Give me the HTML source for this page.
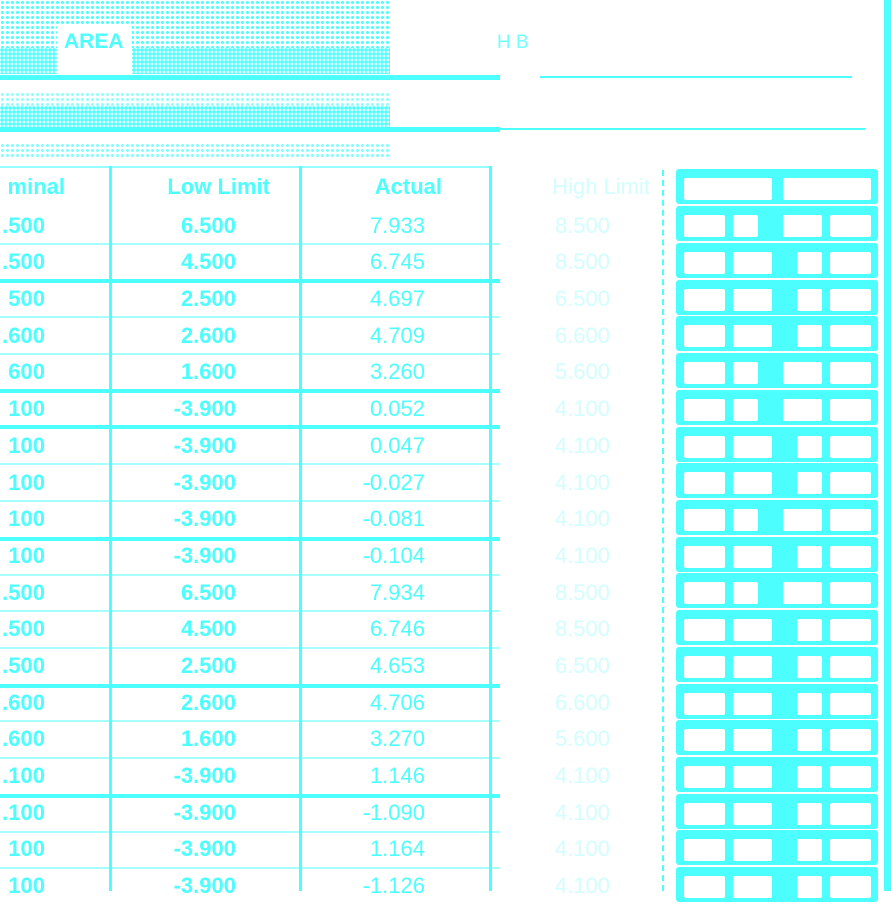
<!DOCTYPE html>
<html><head><meta charset="utf-8"><style>
*{margin:0;padding:0;box-sizing:border-box}
body{width:891px;height:891px;background:#fff;position:relative;overflow:hidden;font-family:"Liberation Sans",sans-serif;color:#4dfefe}
.a{position:absolute}
.noise{background-image:radial-gradient(#4dfefe 1.3px,transparent 1.8px);background-size:5px 5px}
.noise2{background-image:radial-gradient(#4dfefe 1.6px,transparent 2px);background-size:4px 4px}
.r{position:absolute;left:0;width:891px;height:37px;line-height:37px;font-size:22px;font-weight:bold}
.r span{position:absolute;text-align:right}
.c1{left:-60px;width:105px}
.c2{left:130px;width:106px}
.c3{left:310px;width:115px;font-weight:normal}
.c4{left:520px;width:90px;color:#d2fefe;font-weight:normal}
.cy{position:absolute;left:676px;width:202px;height:35px;background:#4dfefe;border-radius:3px}
.cy i{position:absolute;top:9px;height:22px;background:#fff;border-radius:2px}
.hl{position:absolute;left:0;width:500px;height:4px;background:#4dfefe}
.tl{position:absolute;left:0;width:500px;height:2px;background:#4dfefe;opacity:.5}
</style></head><body>
<div class="a noise" style="left:0;top:0;width:390px;height:48px"></div>
<div class="a noise2" style="left:0;top:48px;width:390px;height:26px"></div>
<div class="a" style="left:57px;top:26px;width:75px;height:48px;background:#fff"></div>
<div class="a" style="left:64px;top:30px;font-size:21px;font-weight:bold">AREA</div>
<div class="a" style="left:497px;top:32px;font-size:19px;opacity:.8">H B</div>
<div class="a" style="left:0;top:75px;width:500px;height:5px;background:#4dfefe"></div>
<div class="a" style="left:540px;top:76px;width:312px;height:2px;background:#4dfefe"></div>
<div class="a noise" style="left:0;top:92px;width:390px;height:14px;opacity:.6"></div>
<div class="a noise2" style="left:0;top:106px;width:390px;height:22px"></div>
<div class="a" style="left:0;top:127px;width:500px;height:5px;background:#4dfefe"></div>
<div class="a" style="left:500px;top:128px;width:365px;height:2px;background:#4dfefe"></div>
<div class="a noise" style="left:0;top:143px;width:390px;height:14px;opacity:.7"></div>
<div class="a" style="left:0;top:166px;width:490px;height:2px;background:#4dfefe;opacity:.6"></div>
<div class="a" style="left:109px;top:166px;width:3px;height:725px;background:#4dfefe"></div>
<div class="a" style="left:299px;top:166px;width:3px;height:725px;background:#4dfefe"></div>
<div class="a" style="left:489px;top:166px;width:3px;height:725px;background:#4dfefe"></div>
<div class="a" style="left:662px;top:170px;width:2px;height:721px;border-left:2px dashed #4dfefe"></div>
<div class="a" style="left:884px;top:0;width:7px;height:891px;background:#4dfefe"></div>
<div class="r" style="top:168px"><span class="c1" style="width:125px">minal</span><span style="left:140px;width:130px">Low Limit</span><span style="left:352px;width:90px">Actual</span><span style="left:510px;width:140px;color:#d2fefe;font-weight:normal">High Limit</span></div>
<div class="cy" style="top:169px;height:35px"><i style="left:8px;width:88px"></i><i style="left:107px;width:88px"></i></div>
<div class="hl" style="top:279px"></div><div class="hl" style="top:389px"></div><div class="hl" style="top:425px"></div><div class="hl" style="top:537px"></div><div class="hl" style="top:684px"></div><div class="hl" style="top:794px"></div>
<div class="tl" style="top:243px"></div><div class="tl" style="top:316px"></div><div class="tl" style="top:353px"></div><div class="tl" style="top:463px"></div><div class="tl" style="top:500px"></div><div class="tl" style="top:574px"></div><div class="tl" style="top:610px"></div><div class="tl" style="top:647px"></div><div class="tl" style="top:720px"></div><div class="tl" style="top:757px"></div><div class="tl" style="top:831px"></div><div class="tl" style="top:867px"></div>

<div class="r" style="top:207px"><span class="c1">.500</span><span class="c2">6.500</span><span class="c3">7.933</span><span class="c4">8.500</span></div>
<div class="r" style="top:243px"><span class="c1">.500</span><span class="c2">4.500</span><span class="c3">6.745</span><span class="c4">8.500</span></div>
<div class="r" style="top:280px"><span class="c1">500</span><span class="c2">2.500</span><span class="c3">4.697</span><span class="c4">6.500</span></div>
<div class="r" style="top:317px"><span class="c1">.600</span><span class="c2">2.600</span><span class="c3">4.709</span><span class="c4">6.600</span></div>
<div class="r" style="top:353px"><span class="c1">600</span><span class="c2">1.600</span><span class="c3">3.260</span><span class="c4">5.600</span></div>
<div class="r" style="top:390px"><span class="c1">100</span><span class="c2">-3.900</span><span class="c3">0.052</span><span class="c4">4.100</span></div>
<div class="r" style="top:427px"><span class="c1">100</span><span class="c2">-3.900</span><span class="c3">0.047</span><span class="c4">4.100</span></div>
<div class="r" style="top:464px"><span class="c1">100</span><span class="c2">-3.900</span><span class="c3">-0.027</span><span class="c4">4.100</span></div>
<div class="r" style="top:500px"><span class="c1">100</span><span class="c2">-3.900</span><span class="c3">-0.081</span><span class="c4">4.100</span></div>
<div class="r" style="top:537px"><span class="c1">100</span><span class="c2">-3.900</span><span class="c3">-0.104</span><span class="c4">4.100</span></div>
<div class="r" style="top:574px"><span class="c1">.500</span><span class="c2">6.500</span><span class="c3">7.934</span><span class="c4">8.500</span></div>
<div class="r" style="top:610px"><span class="c1">.500</span><span class="c2">4.500</span><span class="c3">6.746</span><span class="c4">8.500</span></div>
<div class="r" style="top:647px"><span class="c1">.500</span><span class="c2">2.500</span><span class="c3">4.653</span><span class="c4">6.500</span></div>
<div class="r" style="top:684px"><span class="c1">.600</span><span class="c2">2.600</span><span class="c3">4.706</span><span class="c4">6.600</span></div>
<div class="r" style="top:720px"><span class="c1">.600</span><span class="c2">1.600</span><span class="c3">3.270</span><span class="c4">5.600</span></div>
<div class="r" style="top:757px"><span class="c1">.100</span><span class="c2">-3.900</span><span class="c3">1.146</span><span class="c4">4.100</span></div>
<div class="r" style="top:794px"><span class="c1">.100</span><span class="c2">-3.900</span><span class="c3">-1.090</span><span class="c4">4.100</span></div>
<div class="r" style="top:830px"><span class="c1">100</span><span class="c2">-3.900</span><span class="c3">1.164</span><span class="c4">4.100</span></div>
<div class="r" style="top:867px"><span class="c1">100</span><span class="c2">-3.900</span><span class="c3">-1.126</span><span class="c4">4.100</span></div>

<div class="cy" style="top:206px"><i style="left:8px;width:41px"></i><i style="left:57px;width:25px"></i><i style="left:107px;width:39px"></i><i style="left:154px;width:41px"></i></div>
<div class="cy" style="top:243px"><i style="left:8px;width:41px"></i><i style="left:57px;width:39px"></i><i style="left:121px;width:25px"></i><i style="left:154px;width:41px"></i></div>
<div class="cy" style="top:280px"><i style="left:8px;width:41px"></i><i style="left:57px;width:39px"></i><i style="left:121px;width:25px"></i><i style="left:154px;width:41px"></i></div>
<div class="cy" style="top:316px"><i style="left:8px;width:41px"></i><i style="left:57px;width:39px"></i><i style="left:121px;width:25px"></i><i style="left:154px;width:41px"></i></div>
<div class="cy" style="top:353px"><i style="left:8px;width:41px"></i><i style="left:57px;width:25px"></i><i style="left:107px;width:39px"></i><i style="left:154px;width:41px"></i></div>
<div class="cy" style="top:390px"><i style="left:8px;width:41px"></i><i style="left:57px;width:25px"></i><i style="left:107px;width:39px"></i><i style="left:154px;width:41px"></i></div>
<div class="cy" style="top:427px"><i style="left:8px;width:41px"></i><i style="left:57px;width:39px"></i><i style="left:121px;width:25px"></i><i style="left:154px;width:41px"></i></div>
<div class="cy" style="top:463px"><i style="left:8px;width:41px"></i><i style="left:57px;width:39px"></i><i style="left:121px;width:25px"></i><i style="left:154px;width:41px"></i></div>
<div class="cy" style="top:500px"><i style="left:8px;width:41px"></i><i style="left:57px;width:25px"></i><i style="left:107px;width:39px"></i><i style="left:154px;width:41px"></i></div>
<div class="cy" style="top:537px"><i style="left:8px;width:41px"></i><i style="left:57px;width:39px"></i><i style="left:121px;width:25px"></i><i style="left:154px;width:41px"></i></div>
<div class="cy" style="top:573px"><i style="left:8px;width:41px"></i><i style="left:57px;width:25px"></i><i style="left:107px;width:39px"></i><i style="left:154px;width:41px"></i></div>
<div class="cy" style="top:610px"><i style="left:8px;width:41px"></i><i style="left:57px;width:39px"></i><i style="left:121px;width:25px"></i><i style="left:154px;width:41px"></i></div>
<div class="cy" style="top:647px"><i style="left:8px;width:41px"></i><i style="left:57px;width:39px"></i><i style="left:121px;width:25px"></i><i style="left:154px;width:41px"></i></div>
<div class="cy" style="top:684px"><i style="left:8px;width:41px"></i><i style="left:57px;width:39px"></i><i style="left:121px;width:25px"></i><i style="left:154px;width:41px"></i></div>
<div class="cy" style="top:720px"><i style="left:8px;width:41px"></i><i style="left:57px;width:39px"></i><i style="left:121px;width:25px"></i><i style="left:154px;width:41px"></i></div>
<div class="cy" style="top:757px"><i style="left:8px;width:41px"></i><i style="left:57px;width:39px"></i><i style="left:121px;width:25px"></i><i style="left:154px;width:41px"></i></div>
<div class="cy" style="top:794px"><i style="left:8px;width:41px"></i><i style="left:57px;width:39px"></i><i style="left:121px;width:25px"></i><i style="left:154px;width:41px"></i></div>
<div class="cy" style="top:830px"><i style="left:8px;width:41px"></i><i style="left:57px;width:39px"></i><i style="left:121px;width:25px"></i><i style="left:154px;width:41px"></i></div>
<div class="cy" style="top:867px"><i style="left:8px;width:41px"></i><i style="left:57px;width:39px"></i><i style="left:121px;width:25px"></i><i style="left:154px;width:41px"></i></div>
</body></html>
